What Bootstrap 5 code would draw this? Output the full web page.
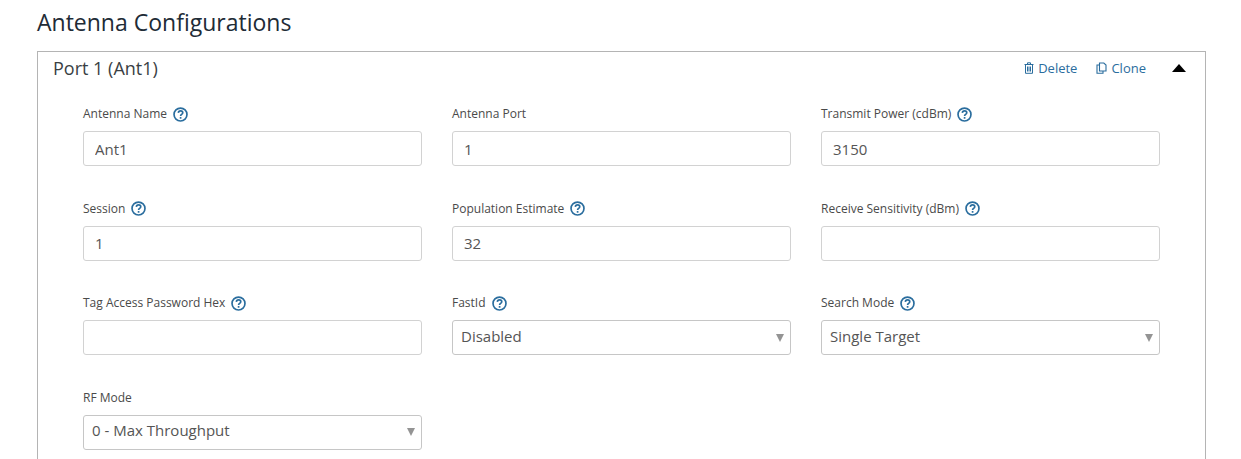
<!DOCTYPE html>
<html lang="en">
<head>
  <meta charset="UTF-8" />
  <meta name="viewport" content="width=device-width, initial-scale=1.0"/>
  <title>Antenna Configurations</title>
  <link href="https://cdn.jsdelivr.net/npm/bootstrap@5.3.3/dist/css/bootstrap.min.css" rel="stylesheet" />
  <style>
    html, body { height: 459px; overflow: hidden; }
    body { font-family: "Open Sans", sans-serif; color: #333; background: #fff; }
    .page-wrap { padding: 5px 35px 0 37px; }
    .page-title { font-size: 23px; line-height: 34px; font-weight: 400; color: #212b36; margin: 0 0 12px; }
    .port-box { border: 1px solid #b4b4b4; border-bottom: 0; height: 408px; overflow: hidden; }
    .port-head { height: 34px; padding: 0 19px 2px 15px; }
    .port-name { font-size: 18px; line-height: 32px; color: #3a3f44; margin: 0; font-weight: 400; }
    .port-link { font-size: 13px; line-height: 16px; color: #2a6d9e; text-decoration: none; }
    .port-link svg { display: block; }
    .link-gap { margin-right: 18px; }
    .clone-link { margin-left: 1px; margin-right: 17px; }
    .caret-up { width: 0; height: 0; border-left: 7px solid transparent; border-right: 7px solid transparent; border-bottom: 8px solid #000; margin-left: 9px; }
    .port-body { padding: 19px 45px 0 45px; }
    .port-row { --bs-gutter-x: 30px; --bs-gutter-y: 0; }
    .field { height: 94.5px; }
    .field-label { font-size: 12px; line-height: 18px; color: #4a4a4a; margin: 0 0 8px; height: 18px; gap: 6px; }
    .field-input.form-control, .field-input.form-select { height: 35px; border: 1px solid #d2d2d2; border-radius: 3px; font-size: 15px; line-height: 20px; color: #555; padding: 6px 11px; box-shadow: none; }
    .field-input.form-select { border-color: #c6c6c6; padding: 4px 24px 8px 8px; background-image: url("data:image/svg+xml,%3csvg xmlns='http://www.w3.org/2000/svg' viewBox='0 0 8 8'%3e%3cpath fill='%23949494' d='M0 0h8L4 8z'/%3e%3c/svg%3e"); background-size: 8px 8px; background-position: right 6px center; }
    .help-icon { display: block; }
  </style>
</head>
<body>
  <svg width="0" height="0" class="position-absolute">
    <symbol id="ic-help" viewBox="0 0 16 16">
      <circle cx="8" cy="8" r="6.9" fill="none" stroke="#2a6d9e" stroke-width="1.800"/>
      <path d="M5.700 6.300c.1-1.400 1.100-2.200 2.400-2.200s2.300.8 2.300 1.900c0 1-.6 1.400-1.300 1.900-.7.4-1 .8-1 1.600" fill="none" stroke="#2a6d9e" stroke-width="1.800"/>
      <rect x="7.200" y="10.700" width="1.800" height="1.800" fill="#2a6d9e"/>
    </symbol>
  </svg>
  <div class="page-wrap">
    <h4 class="page-title">Antenna Configurations</h4>
    <div class="port-box">
      <div class="port-head d-flex align-items-center">
        <h5 class="port-name flex-grow-1">Port 1 (Ant1)</h5>
        <a href="#" class="port-link link-gap d-flex align-items-center gap-1">
          <svg width="10" height="12" viewBox="0 0 10 12" fill="none" stroke="#2a6d9e" stroke-width="1"><path d="M1.500 3v8.300h7V3"/><path d="M.5 2.500h9"/><path d="M3.500 2.300V.8h3v1.500"/><path d="M3.500 4.500v5M5 4.500v5M6.500 4.500v5"/></svg>
          Delete
        </a>
        <a href="#" class="port-link clone-link d-flex align-items-center gap-1">
          <svg width="11" height="12" viewBox="0 0 11 12" fill="none" stroke="#2a6d9e" stroke-width="1.100"><path d="M3.500 9V1h4.300L10 3v6z"/><path d="M3.500 3H1v8.300h6V9"/></svg>
          Clone
        </a>
        <span class="caret-up"></span>
      </div>
      <div class="port-body">
        <div class="row port-row">
          <div class="col-4 field">
            <div class="field-label d-flex align-items-center">Antenna Name <svg class="help-icon" width="15" height="15"><use href="#ic-help"/></svg></div>
            <input class="form-control field-input" type="text" value="Ant1" />
          </div>
          <div class="col-4 field">
            <div class="field-label d-flex align-items-center">Antenna Port</div>
            <input class="form-control field-input" type="text" value="1" />
          </div>
          <div class="col-4 field">
            <div class="field-label d-flex align-items-center">Transmit Power (cdBm) <svg class="help-icon" width="15" height="15"><use href="#ic-help"/></svg></div>
            <input class="form-control field-input" type="text" value="3150" />
          </div>
          <div class="col-4 field">
            <div class="field-label d-flex align-items-center">Session <svg class="help-icon" width="15" height="15"><use href="#ic-help"/></svg></div>
            <input class="form-control field-input" type="text" value="1" />
          </div>
          <div class="col-4 field">
            <div class="field-label d-flex align-items-center">Population Estimate <svg class="help-icon" width="15" height="15"><use href="#ic-help"/></svg></div>
            <input class="form-control field-input" type="text" value="32" />
          </div>
          <div class="col-4 field">
            <div class="field-label d-flex align-items-center">Receive Sensitivity (dBm) <svg class="help-icon" width="15" height="15"><use href="#ic-help"/></svg></div>
            <input class="form-control field-input" type="text" value="" />
          </div>
          <div class="col-4 field">
            <div class="field-label d-flex align-items-center">Tag Access Password Hex <svg class="help-icon" width="15" height="15"><use href="#ic-help"/></svg></div>
            <input class="form-control field-input" type="text" value="" />
          </div>
          <div class="col-4 field">
            <div class="field-label d-flex align-items-center">FastId <svg class="help-icon" width="15" height="15"><use href="#ic-help"/></svg></div>
            <select class="form-select field-input"><option>Disabled</option></select>
          </div>
          <div class="col-4 field">
            <div class="field-label d-flex align-items-center">Search Mode <svg class="help-icon" width="15" height="15"><use href="#ic-help"/></svg></div>
            <select class="form-select field-input"><option>Single Target</option></select>
          </div>
          <div class="col-4 field">
            <div class="field-label d-flex align-items-center">RF Mode</div>
            <select class="form-select field-input"><option>0 - Max Throughput</option></select>
          </div>
        </div>
      </div>
    </div>
  </div>
  <script src="https://cdn.jsdelivr.net/npm/bootstrap@5.3.3/dist/js/bootstrap.bundle.min.js"></script>
</body>
</html>
